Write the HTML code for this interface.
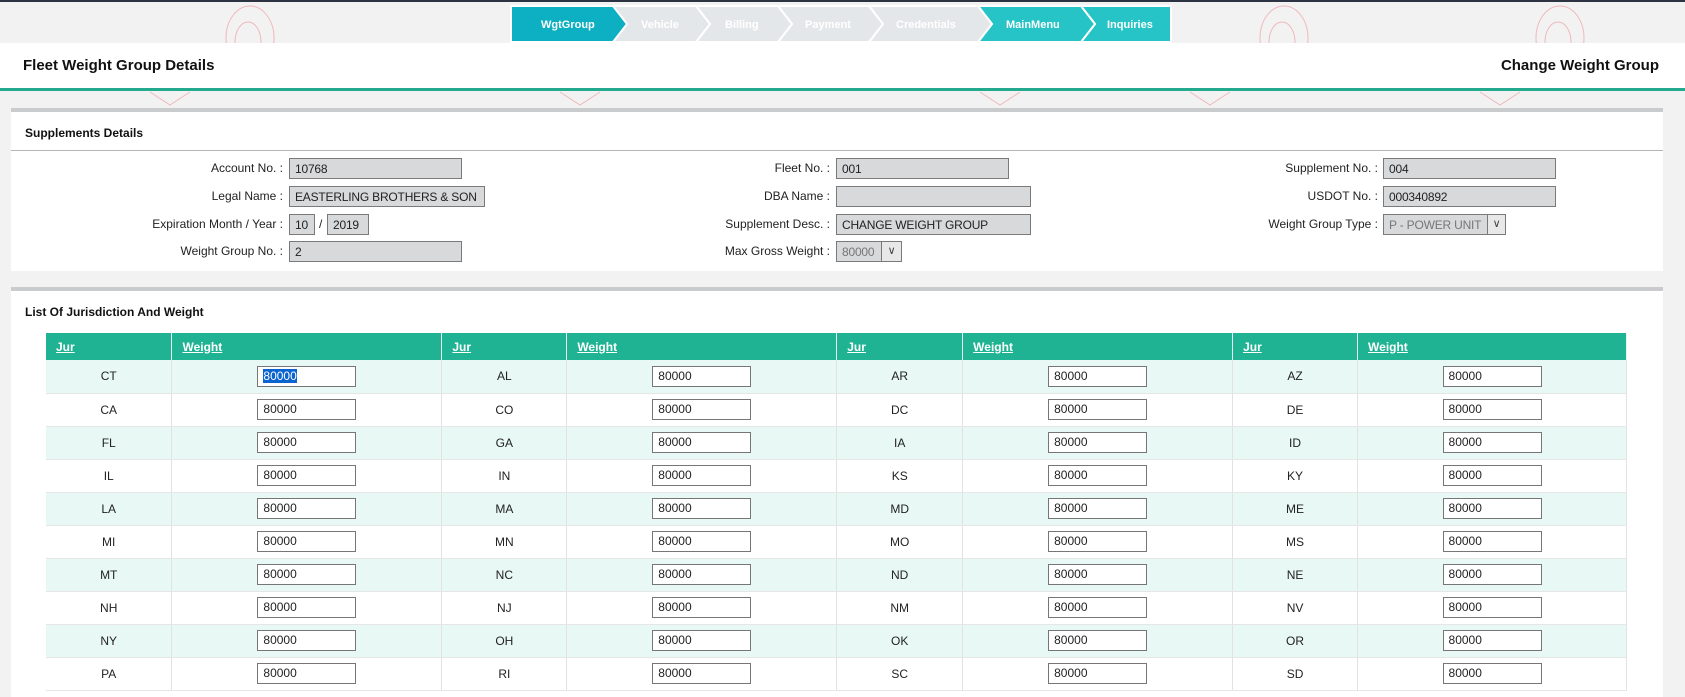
<!DOCTYPE html>
<html><head><meta charset="utf-8"><style>
*{box-sizing:border-box;margin:0;padding:0}
body{width:1685px;height:692px;overflow:hidden;background:#f2f2f2;font-family:"Liberation Sans",sans-serif;font-size:12px;color:#222;position:relative}
.abs{position:absolute}
.topline{left:0;top:0;width:1685px;height:2px;background:#2c3444}
.hdr{left:0;top:43px;width:1685px;height:48px;background:#fff;border-bottom:3px solid #23a98d}
.hdr .t{position:absolute;top:14px;font-size:15px;font-weight:bold;color:#111}
.panel{background:#fff;border-top:4px solid #c9cbcc}
.ptitle{position:absolute;left:14px;font-size:12px;font-weight:bold;color:#111}
.lbl{position:absolute;text-align:right;width:300px;font-size:12px;color:#222}
.inp{position:absolute;height:21px;background:#d7d9db;border:1px solid #7a7a7a;font-size:12px;padding:3px 5px;color:#222;white-space:nowrap;overflow:hidden;letter-spacing:-0.2px}
table{position:absolute;left:46px;top:333px;width:1581px;border-collapse:collapse}
th{background:#1fb393;color:#fff;text-align:left;padding-left:10px;height:27px;font-size:12px;text-decoration:underline;font-weight:bold;border-right:1px solid #e8f4f1}
td{height:33px;text-align:center;border-right:1px solid #e2e2e2;border-bottom:1px solid #e6e6e6;font-size:12px}
tr:nth-child(even) td{background:#e8f8f4}
tr:nth-child(odd) td{background:#fff}
.w{display:inline-block;width:99px;height:21px;border:1px solid #767676;background:#fff;text-align:left;padding:2px 5px;line-height:15px;vertical-align:middle}
.sel{background:#0a64d0;color:#fff}
</style></head><body>
<div class="abs topline"></div>
<svg class="abs" style="left:0;top:0" width="1685" height="120">
<g fill="none" stroke="#f0b8bd" stroke-width="1">
<ellipse cx="250" cy="38" rx="24" ry="32"/><ellipse cx="248" cy="42" rx="13" ry="20"/>
<ellipse cx="675" cy="38" rx="24" ry="32"/><ellipse cx="673" cy="42" rx="13" ry="20"/>
<ellipse cx="1284" cy="38" rx="24" ry="32"/><ellipse cx="1282" cy="42" rx="13" ry="20"/>
<ellipse cx="1560" cy="38" rx="24" ry="32"/><ellipse cx="1558" cy="42" rx="13" ry="20"/>
<path d="M150 92 L170 105 L190 92 M560 92 L580 105 L600 92 M980 92 L1000 105 L1020 92 M1190 92 L1210 105 L1230 92 M1480 92 L1500 105 L1520 92"/>
</g></svg>
<svg class="abs" style="left:0;top:0" width="1685" height="45">
<g stroke="#fff" stroke-width="2">
<polygon points="1081,6 1171,6 1171,42 1081,42 1095,24" fill="#26c4c6"/>
<polygon points="978,6 1081,6 1095,24 1081,42 978,42 992,24" fill="#26c4c6"/>
<polygon points="869,6 978,6 992,24 978,42 869,42 883,24" fill="#e4e7ea"/>
<polygon points="778,6 869,6 883,24 869,42 778,42 792,24" fill="#e4e7ea"/>
<polygon points="696,6 778,6 792,24 778,42 696,42 710,24" fill="#e4e7ea"/>
<polygon points="613,6 696,6 710,24 696,42 613,42 627,24" fill="#e4e7ea"/>
<polygon points="511,6 613,6 627,24 613,42 511,42" fill="#0db0c2"/>
</g>
<g fill="#fff" font-family="Liberation Sans,sans-serif" font-size="11" font-weight="bold">
<text x="541" y="28">WgtGroup</text><text x="641" y="28">Vehicle</text><text x="725" y="28">Billing</text>
<text x="805" y="28">Payment</text><text x="896" y="28">Credentials</text><text x="1006" y="28">MainMenu</text><text x="1107" y="28">Inquiries</text>
</g></svg>
<div class="abs hdr"><div class="t" style="left:23px">Fleet Weight Group Details</div><div class="t" style="right:26px">Change Weight Group</div></div>

<div class="abs panel" style="left:11px;top:108px;width:1652px;height:163px">
<div class="ptitle" style="top:14px">Supplements Details</div>
<div class="abs" style="left:0;top:38px;width:1652px;height:1px;background:#b5b5b5"></div>
</div>
<div class="lbl" style="left:-17px;top:161px">Account No. :</div><div class="inp" style="left:289px;top:158px;width:173px">10768</div>
<div class="lbl" style="left:-17px;top:189px">Legal Name :</div><div class="inp" style="left:289px;top:186px;width:196px">EASTERLING BROTHERS &amp; SON</div>
<div class="lbl" style="left:-17px;top:217px">Expiration Month / Year :</div><div class="inp" style="left:289px;top:214px;width:26px">10</div><div class="abs" style="left:319px;top:217px">/</div><div class="inp" style="left:327px;top:214px;width:42px">2019</div>
<div class="lbl" style="left:-17px;top:244px">Weight Group No. :</div><div class="inp" style="left:289px;top:241px;width:173px">2</div>

<div class="lbl" style="left:530px;top:161px">Fleet No. :</div><div class="inp" style="left:836px;top:158px;width:173px">001</div>
<div class="lbl" style="left:530px;top:189px">DBA Name :</div><div class="inp" style="left:836px;top:186px;width:195px"></div>
<div class="lbl" style="left:530px;top:217px">Supplement Desc. :</div><div class="inp" style="left:836px;top:214px;width:195px">CHANGE WEIGHT GROUP</div>
<div class="lbl" style="left:530px;top:244px">Max Gross Weight :</div><div class="inp" style="left:836px;top:241px;width:66px;color:#777">80000<span style="position:absolute;right:0;top:0;width:20px;height:19px;border-left:1px solid #7a7a7a;background:#e8e8e8;text-align:center;color:#444;font-size:11px;line-height:19px">&#x2228;</span></div>

<div class="lbl" style="left:1078px;top:161px">Supplement No. :</div><div class="inp" style="left:1383px;top:158px;width:173px">004</div>
<div class="lbl" style="left:1078px;top:189px">USDOT No. :</div><div class="inp" style="left:1383px;top:186px;width:173px">000340892</div>
<div class="lbl" style="left:1078px;top:217px">Weight Group Type :</div><div class="inp" style="left:1383px;top:214px;width:123px;color:#777">P - POWER UNIT<span style="position:absolute;right:0;top:0;width:18px;height:19px;border-left:1px solid #7a7a7a;background:#e8e8e8;text-align:center;color:#444;font-size:11px;line-height:19px">&#x2228;</span></div>

<div class="abs panel" style="left:11px;top:287px;width:1652px;height:410px">
<div class="ptitle" style="top:14px">List Of Jurisdiction And Weight</div>
</div>
<table>
<colgroup><col style="width:126px"><col style="width:270px"><col style="width:125px"><col style="width:270px"><col style="width:126px"><col style="width:270px"><col style="width:125px"><col style="width:269px"></colgroup>
<tr><th>Jur</th><th>Weight</th><th>Jur</th><th>Weight</th><th>Jur</th><th>Weight</th><th>Jur</th><th>Weight</th></tr>
<tr><td>CT</td><td><span class="w"><span class="sel">80000</span></span></td><td>AL</td><td><span class="w">80000</span></td><td>AR</td><td><span class="w">80000</span></td><td>AZ</td><td><span class="w">80000</span></td></tr>
<tr><td>CA</td><td><span class="w">80000</span></td><td>CO</td><td><span class="w">80000</span></td><td>DC</td><td><span class="w">80000</span></td><td>DE</td><td><span class="w">80000</span></td></tr>
<tr><td>FL</td><td><span class="w">80000</span></td><td>GA</td><td><span class="w">80000</span></td><td>IA</td><td><span class="w">80000</span></td><td>ID</td><td><span class="w">80000</span></td></tr>
<tr><td>IL</td><td><span class="w">80000</span></td><td>IN</td><td><span class="w">80000</span></td><td>KS</td><td><span class="w">80000</span></td><td>KY</td><td><span class="w">80000</span></td></tr>
<tr><td>LA</td><td><span class="w">80000</span></td><td>MA</td><td><span class="w">80000</span></td><td>MD</td><td><span class="w">80000</span></td><td>ME</td><td><span class="w">80000</span></td></tr>
<tr><td>MI</td><td><span class="w">80000</span></td><td>MN</td><td><span class="w">80000</span></td><td>MO</td><td><span class="w">80000</span></td><td>MS</td><td><span class="w">80000</span></td></tr>
<tr><td>MT</td><td><span class="w">80000</span></td><td>NC</td><td><span class="w">80000</span></td><td>ND</td><td><span class="w">80000</span></td><td>NE</td><td><span class="w">80000</span></td></tr>
<tr><td>NH</td><td><span class="w">80000</span></td><td>NJ</td><td><span class="w">80000</span></td><td>NM</td><td><span class="w">80000</span></td><td>NV</td><td><span class="w">80000</span></td></tr>
<tr><td>NY</td><td><span class="w">80000</span></td><td>OH</td><td><span class="w">80000</span></td><td>OK</td><td><span class="w">80000</span></td><td>OR</td><td><span class="w">80000</span></td></tr>
<tr><td>PA</td><td><span class="w">80000</span></td><td>RI</td><td><span class="w">80000</span></td><td>SC</td><td><span class="w">80000</span></td><td>SD</td><td><span class="w">80000</span></td></tr>
</table>
</body></html>
